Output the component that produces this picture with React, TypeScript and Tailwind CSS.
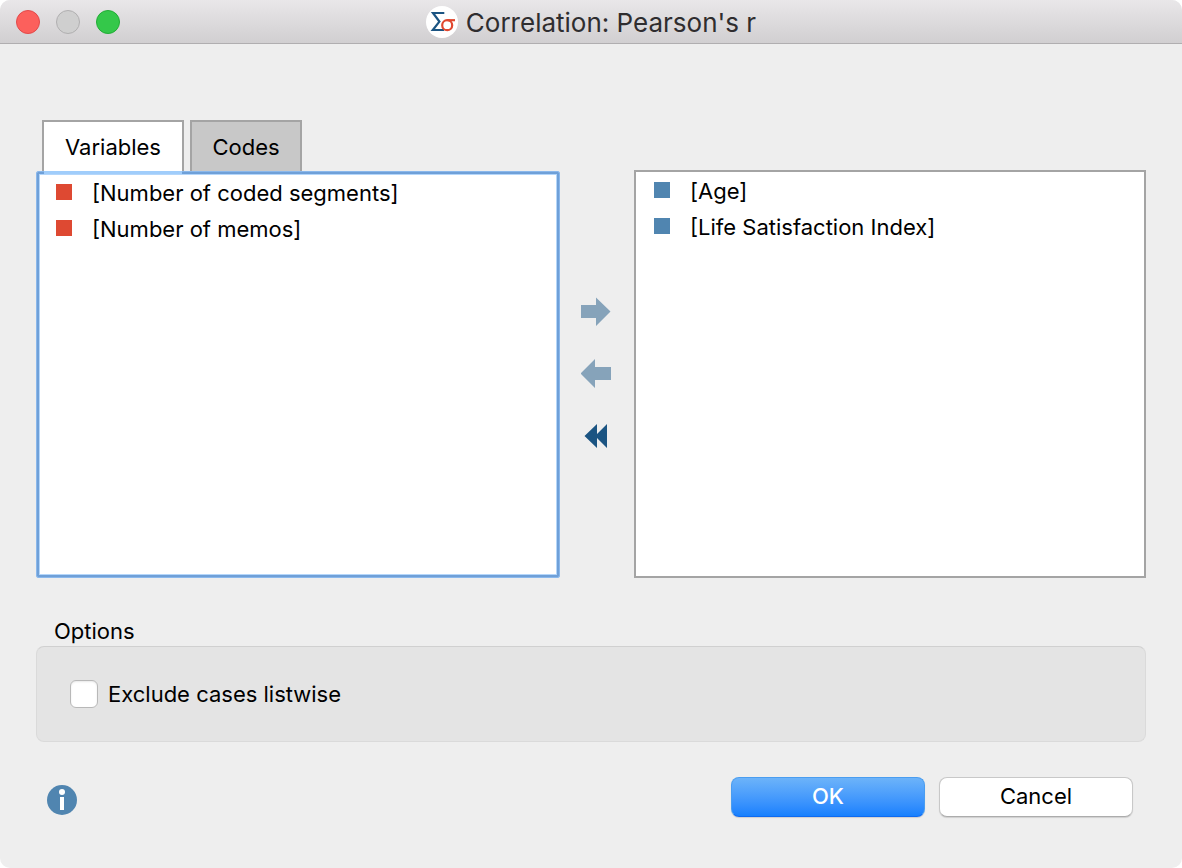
import React, { useState } from 'react';

interface VariableListProps {
  label: string;
  items: string[];
  markerClass: string;
  className: string;
}

const VariableList: React.FC<VariableListProps> = ({ label, items, markerClass, className }) => (
  <ul aria-label={label} className={`flex-1 bg-white ${className}`}>
    {items.map((item) => (
      <li key={item} className="flex h-9 items-center gap-5">
        <span className={`mb-0.5 size-4 shrink-0 ${markerClass}`} />
        <span>{item}</span>
      </li>
    ))}
  </ul>
);

const AppLogo = () => (
  <svg className="size-8" viewBox="0 0 32 32" fill="none" aria-hidden="true">
    <circle cx="16" cy="16" r="16" fill="#fff" />
    <path d="M18.3 7H7L13.4 15.6L6.8 24H18" stroke="#1b5482" strokeWidth="2.2" />
    <path d="M29 14.2H21.5" stroke="#e0472f" strokeWidth="2.2" />
    <circle cx="21.2" cy="19.2" r="5" stroke="#e0472f" strokeWidth="2.2" />
  </svg>
);

const TitleBar = () => (
  <header className="grid h-11 grid-cols-[1fr_auto_1fr] items-center border-b border-[#b0aeb0] bg-linear-to-b from-[#e9e7e9] to-[#d1cfd1] px-4 pt-px">
    <div className="flex gap-4">
      <button type="button" aria-label="Close" className="size-6 rounded-full border border-[#e2494a] bg-[#fc605c]" />
      <button type="button" aria-label="Minimize" disabled className="size-6 rounded-full border border-[#b0afb0] bg-[#cfcfcf]" />
      <button type="button" aria-label="Zoom" className="size-6 rounded-full border border-[#22ac36] bg-[#34c84a]" />
    </div>
    <div className="flex items-center gap-2">
      <AppLogo />
      <h1 className="pt-0.5 text-[26px] leading-8 text-[#2f2d2f]">Correlation: Pearson's r</h1>
    </div>
  </header>
);

const tabs = ['Variables', 'Codes'];

export default function App() {
  const [activeTab, setActiveTab] = useState('Variables');
  const [listwise, setListwise] = useState(false);

  return (
    <div className="min-h-screen bg-white font-['Inter',sans-serif] text-[22px] leading-7 text-black">
      <div className="flex min-h-screen flex-col overflow-hidden rounded-[10px] bg-[#eeeeee]">
        <TitleBar />

        <main className="flex flex-1 flex-col px-9 pt-[76px] pb-[51px]">
          <div className="flex flex-1">
            <div className="flex flex-[524] flex-col">
              <div role="tablist" className="flex gap-1.5 pl-1.5">
                {tabs.map((tab) => (
                  <button
                    key={tab}
                    type="button"
                    role="tab"
                    aria-selected={activeTab === tab}
                    onClick={() => setActiveTab(tab)}
                    className={`relative h-[51px] border-2 border-b-0 border-[#a4a4a4] first:w-[142px] last:w-[112px] ${
                      activeTab === tab ? 'bg-white' : 'bg-[#c8c8c8]'
                    }`}
                  >
                    {tab}
                    {activeTab === tab && <span className="absolute inset-x-0 top-full h-[3px] bg-[#a0cdfb]" />}
                  </button>
                ))}
              </div>
              <VariableList
                label="Available variables"
                items={activeTab === 'Variables' ? ['[Number of coded segments]', '[Number of memos]'] : []}
                markerClass="bg-[#de4932]"
                className="rounded-xs border border-[#8ab8ec] px-[19px] py-[3px] shadow-[inset_0_0_0_2px_#6fa0d8,inset_0_0_0_3px_#b4d6fa]"
              />
            </div>

            <div className="mt-[50px] flex w-[74px] flex-col items-center justify-center gap-[30px]">
              <button type="button" aria-label="Add selected">
                <svg className="size-8" viewBox="0 0 32 32" fill="#86a3ba">
                  <path d="M0 9H15V1.5L29.5 15.5L15 30V22H0Z" />
                </svg>
              </button>
              <button type="button" aria-label="Remove selected">
                <svg className="size-8" viewBox="0 0 32 32" fill="#86a3ba">
                  <path d="M30 9H14V1L-0.5 15.5L14 30V22H30Z" />
                </svg>
              </button>
              <button type="button" aria-label="Remove all">
                <svg className="size-8" viewBox="0 0 32 32" fill="#1b5482">
                  <path d="M3.5 16L16 4V14L26 4V28L16 18V28Z" />
                </svg>
              </button>
            </div>

            <div className="mt-[50px] flex flex-[512] flex-col">
              <VariableList
                label="Selected variables"
                items={['[Age]', '[Life Satisfaction Index]']}
                markerClass="bg-[#5085b0]"
                className="border-2 border-[#a4a4a4] px-[18px] pt-px"
              />
            </div>
          </div>

          <h2 className="mt-[39px] mb-px pl-[18px]">Options</h2>
          <div className="flex h-24 items-center rounded-lg border border-[#dadada] border-t-[#d0d0d0] bg-[#e4e4e4] px-[33px]">
            <label className="flex items-center gap-2.5">
              <input
                type="checkbox"
                checked={listwise}
                onChange={(e) => setListwise(e.target.checked)}
                className="size-7 appearance-none rounded-md border border-[#b8b8b8] bg-white shadow-[inset_0_1px_2px_#00000018] checked:bg-[#1a82fb]"
              />
              Exclude cases listwise
            </label>
          </div>

          <div className="mt-[35px] flex items-end justify-between pr-[13px] pl-[11px]">
            <button type="button" aria-label="Help" className="pb-0.5">
              <svg className="size-[30px]" viewBox="0 0 30 30">
                <circle cx="15" cy="15" r="15" fill="#5085b0" />
                <circle cx="15" cy="7" r="3" fill="#fff" />
                <path d="M13 12H17V25H13Z" fill="#fff" />
              </svg>
            </button>
            <div className="flex gap-3.5">
              <button
                type="button"
                className="h-10 w-[194px] rounded-lg border border-[#4a9df0] border-b-[#0f6af0] bg-linear-to-b from-[#6cb3f9] to-[#1680fe] pb-0.5 font-medium text-white shadow-[0_1px_1px_#00000022]"
              >
                OK
              </button>
              <button
                type="button"
                className="h-10 w-[194px] rounded-lg border border-[#c8c8c8] border-b-[#acacac] bg-white pb-0.5 shadow-[0_1px_1px_#00000022]"
              >
                Cancel
              </button>
            </div>
          </div>
        </main>
      </div>
    </div>
  );
}
